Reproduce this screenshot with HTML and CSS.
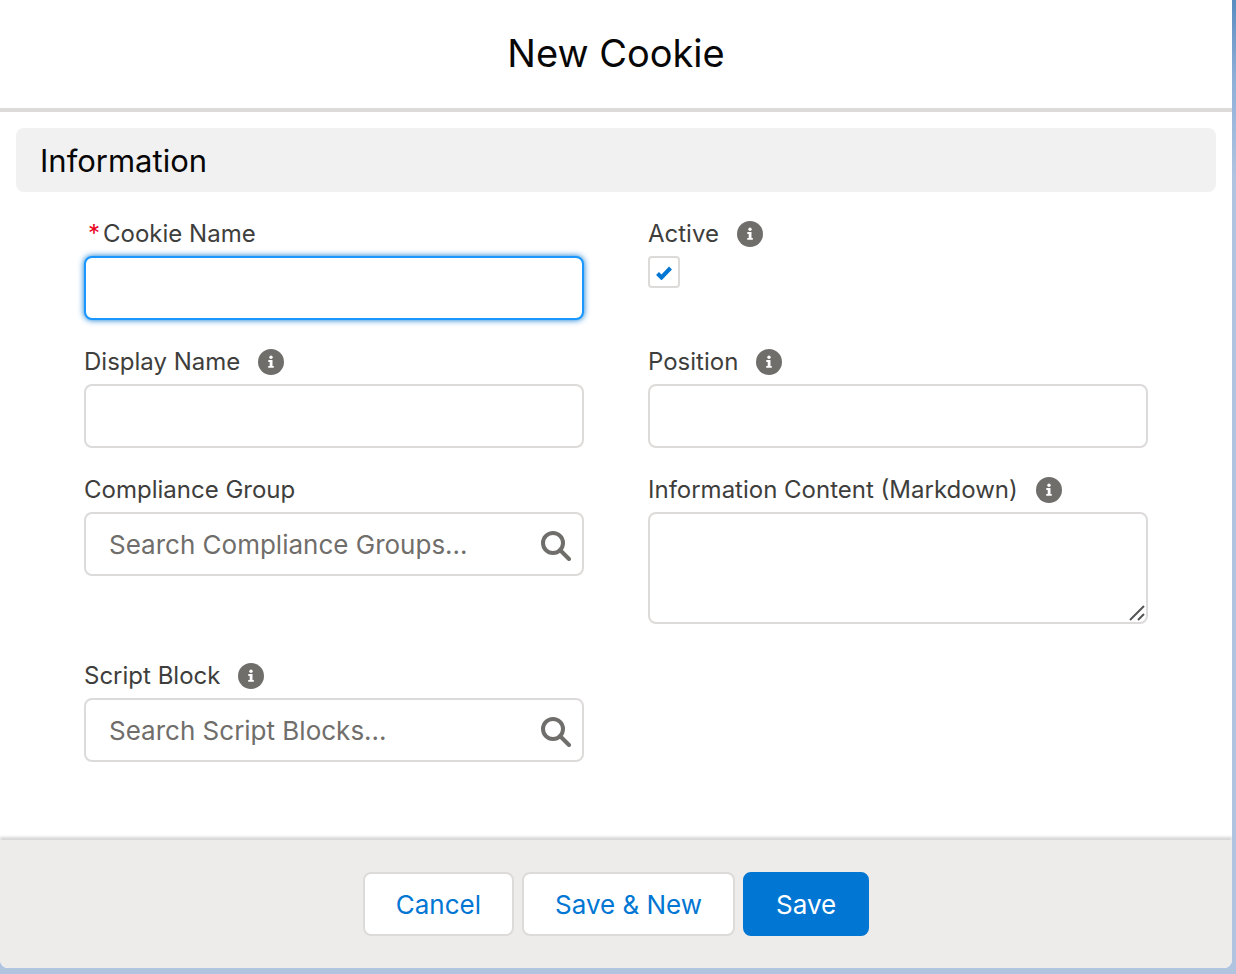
FILE: index.html
```html
<!DOCTYPE html>
<html lang="en">
<head>
    <meta charset="UTF-8">
    <meta name="viewport" content="width=device-width, initial-scale=1.0">
    <title>New Cookie</title>
    <link rel="stylesheet" href="styles.css">
</head>
<body>
    <!-- shared icons -->
    <svg class="sprite" aria-hidden="true">
        <symbol id="icon-info" viewBox="0 0 26 26">
            <circle cx="13" cy="13" r="13" fill="#706e6b"/>
            <circle cx="13" cy="8.3" r="1.7" fill="#fff"/>
            <path d="M10.3 11h4.2v6h1.3v1.8h-5.6V17h1.5v-4.1h-1.4z" fill="#fff"/>
        </symbol>
        <symbol id="icon-search" viewBox="0 0 30 30">
            <circle cx="12" cy="12" r="10" fill="none" stroke="#706e6b" stroke-width="4"/>
            <path d="M19 19l9 9" fill="none" stroke="#706e6b" stroke-width="4" stroke-linecap="round"/>
        </symbol>
    </svg>

    <main class="modal">
        <header class="modal-header">
            <h1>New Cookie</h1>
        </header>

        <form id="cookieForm" class="modal-body">
            <h2 class="section-title">Information</h2>

            <div class="fields">
                <div class="field">
                    <div class="field-label">
                        <label for="cookieName" class="required"><abbr title="required">*</abbr>Cookie Name</label>
                    </div>
                    <input type="text" id="cookieName" name="cookieName" class="text-input focused">
                </div>

                <div class="field">
                    <div class="field-label">
                        <label for="active">Active</label>
                        <svg class="info"><use href="#icon-info"/></svg>
                    </div>
                    <div class="checkbox-wrap">
                        <input type="checkbox" id="active" name="active" class="checkbox" checked>
                        <svg class="checkmark" viewBox="0 0 16 14" aria-hidden="true"><path d="M1.5 7.5l4 4L14.5 2" fill="none" stroke="#0176d3" stroke-width="4"/></svg>
                    </div>
                </div>

                <div class="field">
                    <div class="field-label">
                        <label for="displayName">Display Name</label>
                        <svg class="info"><use href="#icon-info"/></svg>
                    </div>
                    <input type="text" id="displayName" name="displayName" class="text-input">
                </div>

                <div class="field">
                    <div class="field-label">
                        <label for="position">Position</label>
                        <svg class="info"><use href="#icon-info"/></svg>
                    </div>
                    <input type="text" id="position" name="position" class="text-input">
                </div>

                <div class="field">
                    <div class="field-label">
                        <label for="complianceGroup">Compliance Group</label>
                    </div>
                    <div class="lookup">
                        <input type="text" id="complianceGroup" name="complianceGroup" class="text-input" placeholder="Search Compliance Groups...">
                        <svg class="search"><use href="#icon-search"/></svg>
                    </div>
                </div>

                <div class="field">
                    <div class="field-label">
                        <label for="content">Information Content (Markdown)</label>
                        <svg class="info"><use href="#icon-info"/></svg>
                    </div>
                    <div class="textarea-wrap">
                        <textarea id="content" name="content" class="text-input"></textarea>
                        <svg class="grip" viewBox="0 0 16 16" aria-hidden="true"><path d="M1 15L15 1M9 15l6-6" fill="none" stroke="#555" stroke-width="2"/></svg>
                    </div>
                </div>

                <div class="field">
                    <div class="field-label">
                        <label for="scriptBlock">Script Block</label>
                        <svg class="info"><use href="#icon-info"/></svg>
                    </div>
                    <div class="lookup">
                        <input type="text" id="scriptBlock" name="scriptBlock" class="text-input" placeholder="Search Script Blocks...">
                        <svg class="search"><use href="#icon-search"/></svg>
                    </div>
                </div>
            </div>
        </form>

        <footer class="modal-footer">
            <button type="button" class="button">Cancel</button>
            <button type="button" class="button">Save &amp; New</button>
            <button type="submit" form="cookieForm" class="button button-brand">Save</button>
        </footer>
    </main>
</body>
</html>
```

FILE: styles.css
```css
* {
    box-sizing: border-box;
}
body {
    margin: 0;
    min-height: 100vh;
    padding: 0 4px 6px 0;
    display: flex;
    font-family: Inter, "Liberation Sans", sans-serif;
    background: linear-gradient(#5a8cc0, #8fb0d8 80px, #b0c4e0 180px);
}
.sprite {
    position: absolute;
    width: 0;
    height: 0;
}
.modal {
    flex: 1;
    display: flex;
    flex-direction: column;
    background: #fff;
    border-radius: 0 0 8px 8px;
}
.modal-header {
    padding: 28px 32px 30px;
    border-bottom: 4px solid #dddbda;
    text-align: center;
}
.modal-header h1 {
    margin: 0;
    font-size: 38px;
    font-weight: 400;
    line-height: 50px;
    color: #080707;
}
.modal-body {
    flex: 1;
    padding: 16px;
}
.section-title {
    margin: 0 0 24px;
    padding: 1px 24px 0;
    font-size: 31px;
    font-weight: 400;
    line-height: 63px;
    color: #080707;
    background: #f1f1f1;
    border-radius: 8px;
}
.fields {
    display: grid;
    grid-template-columns: 1fr 1fr;
    gap: 24px 64px;
    padding: 0 68px;
}
.field-label {
    display: flex;
    align-items: center;
    gap: 18px;
    height: 36px;
    margin-bottom: 4px;
    font-size: 24px;
    color: #3e3e3c;
}
.field-label label {
    padding-bottom: 2px;
}
.required {
    padding-left: 4px;
}
.required abbr {
    margin-right: 3px;
    color: #ea001e;
    text-decoration: none;
}
.info {
    width: 26px;
    height: 26px;
}
.text-input {
    display: block;
    width: 100%;
    height: 64px;
    padding: 0 23px;
    font: inherit;
    font-size: 26px;
    color: #080707;
    background: #fff;
    border: 2px solid #dddbda;
    border-radius: 8px;
    outline: none;
}
.text-input::placeholder {
    color: #706e6b;
}
.text-input.focused,
.text-input:focus {
    border-color: #1b96ff;
    box-shadow: 0 0 6px #0176d3;
}
.lookup,
.textarea-wrap,
.checkbox-wrap {
    position: relative;
}
.search {
    position: absolute;
    top: 19px;
    right: 13px;
    width: 30px;
    height: 30px;
}
.textarea-wrap {
    margin-bottom: 10px;
}
textarea.text-input {
    height: 112px;
    padding: 16px 23px;
    resize: none;
}
.grip {
    position: absolute;
    right: 3px;
    bottom: 3px;
    width: 16px;
    height: 16px;
}
.checkbox-wrap {
    width: 32px;
    height: 32px;
}
.checkbox {
    display: block;
    width: 32px;
    height: 32px;
    margin: 0;
    appearance: none;
    background: #fff;
    border: 2px solid #dddbda;
    border-radius: 4px;
}
.checkmark {
    position: absolute;
    top: 10px;
    left: 8px;
    width: 16px;
    height: 14px;
    pointer-events: none;
    visibility: hidden;
}
.checkbox:checked + .checkmark {
    visibility: visible;
}
.modal-footer {
    display: flex;
    justify-content: center;
    gap: 8px;
    padding: 32px;
    background: #eeecea;
    border-radius: 0 0 8px 8px;
    box-shadow: 0 -3px 3px rgba(0, 0, 0, 0.16);
    clip-path: inset(-8px 0 0 0 round 0 0 8px 8px);
}
.button {
    height: 64px;
    padding: 0 31px;
    font: inherit;
    font-size: 26px;
    color: #0176d3;
    background: #fff;
    border: 2px solid #dddbda;
    border-radius: 8px;
    cursor: pointer;
}
.button-brand {
    color: #fff;
    background: #0176d3;
    border-color: #0176d3;
}
```
